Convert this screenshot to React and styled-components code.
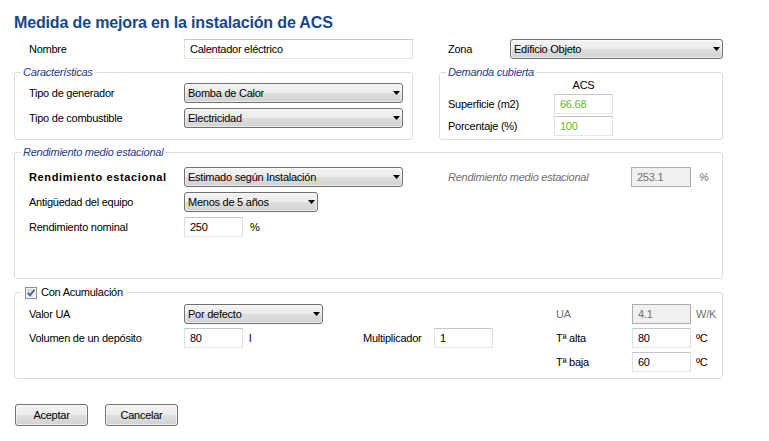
import React from 'react';
import styled, { createGlobalStyle } from 'styled-components';

const Global = createGlobalStyle`
  html, body { margin: 0; padding: 0; background: #ffffff; }
  body {
    font-family: "Liberation Sans", Arial, sans-serif;
    font-size: 11px;
    color: #000;
  }
`;

const Page = styled.div`
  width: 709px;
  padding: 13px 0 0 14px;
  font-family: "Liberation Sans", Arial, sans-serif;
  font-size: 11px;
  line-height: 13px;
  letter-spacing: -0.25px;
`;

const Title = styled.h1`
  margin: 0;
  font: bold 16px/20px "Liberation Sans", Arial, sans-serif;
  letter-spacing: -0.15px;
  color: #17478a;
`;

const Halves = styled.div`
  display: grid;
  grid-template-columns: 399px 284px;
  column-gap: 26px;
  margin-top: ${p => p.$top}px;
`;

const Line = styled.div`
  display: flex;
  align-items: center;
  height: 20px;
  padding-left: ${p => p.$pad}px;
`;

const Group = styled.fieldset`
  margin: ${p => p.$top || 0}px 0 0;
  min-width: 0;
  border: 1px solid #d5dfe5;
  border-radius: 3px;
  padding: ${p => p.$pad};
`;

const Legend = styled.legend`
  margin-left: ${p => p.$shift}px;
  padding: 0 ${p => p.$side || 2}px;
  line-height: 13px;
  font-style: ${p => (p.$plain ? 'normal' : 'italic')};
  color: ${p => (p.$plain ? '#000' : '#1b3b8f')};
  display: flex;
  align-items: center;
  gap: 4px;
`;

const Grid = styled.div`
  display: grid;
  grid-template-columns: ${p => p.$cols};
  grid-template-rows: ${p => p.$rows || 'none'};
  grid-auto-rows: 20px;
  row-gap: ${p => p.$gap}px;
  align-items: center;
`;

const Cell = styled.div`
  display: flex;
  align-items: center;
  justify-content: ${p => (p.$center ? 'center' : 'flex-start')};
  gap: ${p => p.$gap || 0}px;
  height: 100%;
`;

const Label = styled.span`
  display: inline-block;
  width: ${p => (p.$w ? `${p.$w}px` : 'auto')};
  flex: none;
  white-space: nowrap;
  color: ${p => (p.$muted ? '#6e6e6e' : '#000')};
  font-style: ${p => (p.$italic ? 'italic' : 'normal')};
  font-weight: ${p => (p.$bold ? 'bold' : 'normal')};
  letter-spacing: ${p => (p.$bold ? '0.65px' : 'inherit')};
`;

const Unit = styled.span`
  white-space: nowrap;
  padding-left: ${p => p.$pad || 0}px;
  color: ${p => (p.$muted ? '#6e6e6e' : '#000')};
  font-style: ${p => (p.$italic ? 'italic' : 'normal')};
`;

const Field = styled.input`
  box-sizing: border-box;
  width: ${p => p.$w}px;
  height: 20px;
  margin: 0;
  padding: 0 0 0 5px;
  flex: none;
  font: inherit;
  letter-spacing: inherit;
  outline: none;
  border: 1px solid;
  border-color: ${p =>
    p.$off ? '#a9adb1' : '#c4c8ce #dde1e6 #e3e7ec #dde1e6'};
  background: ${p => (p.$off ? '#f0f0f0' : '#ffffff')};
  color: ${p => (p.$off ? '#707070' : p.$green ? '#6ab52f' : '#000')};
`;

const Combo = styled.div`
  box-sizing: border-box;
  width: ${p => p.$w}px;
  height: 20px;
  flex: none;
  display: flex;
  align-items: center;
  justify-content: space-between;
  padding: 0 2px 0 3px;
  border: 1px solid #707070;
  border-radius: 3px;
  background: linear-gradient(#f3f3f3 0%, #ececec 50%, #dedede 50%, #d2d2d2 100%);
  box-shadow: inset 0 0 0 1px rgba(255, 255, 255, 0.55);
  white-space: nowrap;
`;

const Arrow = () => (
  <svg width="7" height="4" viewBox="0 0 7 4" aria-hidden="true">
    <polygon points="0,0 7,0 3.5,4" fill="#000" />
  </svg>
);

const Select = ({ w, children }) => (
  <Combo $w={w}>
    <span>{children}</span>
    <Arrow />
  </Combo>
);

const CheckBox = () => (
  <svg width="12" height="12" viewBox="0 0 12 12" aria-hidden="true">
    <defs>
      <linearGradient id="cbg" x1="0" y1="0" x2="1" y2="1">
        <stop offset="0" stopColor="#cdd1d7" />
        <stop offset="1" stopColor="#f7f7f7" />
      </linearGradient>
    </defs>
    <rect x="0.5" y="0.5" width="11" height="11" fill="#f4f4f4" stroke="#8e8f8f" />
    <rect x="2" y="2" width="8" height="8" fill="url(#cbg)" />
    <path d="M2.8 5.8 L5 8.4 L9.4 2.8" fill="none" stroke="#3d5a98" strokeWidth="1.7" />
  </svg>
);

const Buttons = styled.div`
  display: flex;
  gap: 17px;
  margin-top: 25px;
  padding-left: 1px;
`;

const Button = styled.button`
  box-sizing: border-box;
  width: 73px;
  height: 22px;
  padding: 0;
  border: 1px solid #707070;
  border-radius: 3px;
  background: linear-gradient(#f3f3f3 0%, #ececec 50%, #dedede 50%, #d2d2d2 100%);
  box-shadow: inset 0 0 0 1px rgba(255, 255, 255, 0.6);
  font: inherit;
  letter-spacing: inherit;
  color: #000;
`;

const Blank = styled.span``;

export default function App() {
  return (
    <>
      <Global />
      <Page>
        <Title>Medida de mejora en la instalación de ACS</Title>

        <Halves $top={6}>
          <Line $pad={15}>
            <Label $w={155}>Nombre</Label>
            <Field $w={229} readOnly defaultValue="Calentador eléctrico" />
          </Line>
          <Line $pad={9}>
            <Label $w={62}>Zona</Label>
            <Select w={213}>Edificio Objeto</Select>
          </Line>
        </Halves>

        <Halves $top={7}>
          <Group $pad="4px 0 11px 14px">
            <Legend $shift={-8}>Características</Legend>
            <Grid $cols="155px 219px" $gap={5}>
              <Label>Tipo de generador</Label>
              <Select w={219}>Bomba de Calor</Select>
              <Label>Tipo de combustible</Label>
              <Select w={219}>Electricidad</Select>
            </Grid>
          </Group>
          <Group $pad="0 0 3px 8px">
            <Legend $shift={-2}>Demanda cubierta</Legend>
            <Grid $cols="106px 59px" $rows="13px 20px 20px" $gap={2}>
              <Blank />
              <Cell $center>ACS</Cell>
              <Label>Superficie (m2)</Label>
              <Field $w={59} $green readOnly defaultValue="66.68" />
              <Label>Porcentaje (%)</Label>
              <Field $w={59} $green readOnly defaultValue="100" />
            </Grid>
          </Group>
        </Halves>

        <Group $top={6} $pad="8px 0 41px 14px">
          <Legend $shift={-8}>Rendimiento medio estacional</Legend>
          <Grid $cols="155px 219px 45px 183px 60px auto" $gap={5}>
            <Label $bold>Rendimiento estacional</Label>
            <Select w={219}>Estimado según Instalación</Select>
            <Blank />
            <Label $italic $muted>Rendimiento medio estacional</Label>
            <Field $w={60} $off readOnly defaultValue="253.1" />
            <Unit $pad={8} $italic $muted>%</Unit>

            <Label>Antigüedad del equipo</Label>
            <Select w={134}>Menos de 5 años</Select>
            <Blank />
            <Blank />
            <Blank />
            <Blank />

            <Label>Rendimiento nominal</Label>
            <Cell $gap={7}>
              <Field $w={59} readOnly defaultValue="250" />
              <Unit>%</Unit>
            </Cell>
          </Grid>
        </Group>

        <Group $top={7} $pad="5px 0 6px 14px">
          <Legend $shift={-8} $plain $side={4}>
            <CheckBox />
            <span>Con Acumulación</span>
          </Legend>
          <Grid $cols="155px 179px 71px 59px 63px 76px 59px auto" $gap={4}>
            <Label>Valor UA</Label>
            <Select w={139}>Por defecto</Select>
            <Blank />
            <Blank />
            <Blank />
            <Label $muted>UA</Label>
            <Field $w={59} $off readOnly defaultValue="4.1" />
            <Unit $pad={5} $muted>W/K</Unit>

            <Label>Volumen de un depósito</Label>
            <Cell $gap={6}>
              <Field $w={59} readOnly defaultValue="80" />
              <Unit>l</Unit>
            </Cell>
            <Label>Multiplicador</Label>
            <Field $w={59} readOnly defaultValue="1" />
            <Blank />
            <Label>Tª alta</Label>
            <Field $w={59} readOnly defaultValue="80" />
            <Unit $pad={5}>ºC</Unit>

            <Blank />
            <Blank />
            <Blank />
            <Blank />
            <Blank />
            <Label>Tª baja</Label>
            <Field $w={59} readOnly defaultValue="60" />
            <Unit $pad={5}>ºC</Unit>
          </Grid>
        </Group>

        <Buttons>
          <Button type="button">Aceptar</Button>
          <Button type="button">Cancelar</Button>
        </Buttons>
      </Page>
    </>
  );
}
